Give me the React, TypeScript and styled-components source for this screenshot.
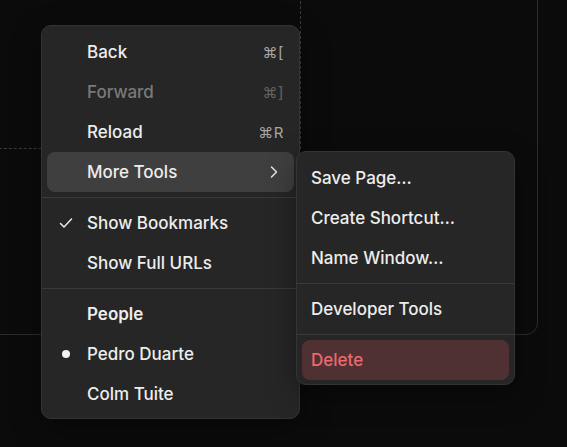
import React from "react";
import styled, { createGlobalStyle, css } from "styled-components";

const Global = createGlobalStyle`
  html, body { margin: 0; padding: 0; }
  body {
    background: #0b0b0b;
    width: 567px;
    height: 447px;
    overflow: hidden;
    font-family: Inter, "Noto Sans", sans-serif;
    -webkit-font-smoothing: antialiased;
  }
`;

const Stage = styled.div`
  position: relative;
  width: 567px;
  height: 447px;
  overflow: hidden;
`;

const Card = styled.div`
  box-sizing: border-box;
  width: 620px;
  height: 435px;
  margin-left: -82px;
  margin-top: -100px;
  border: 1px solid #2c2c2c;
  border-radius: 12px;
  display: flex;
  align-items: flex-start;
`;

const TriggerArea = styled.div`
  box-sizing: border-box;
  width: 382px;
  height: 248px;
  border-right: 1px dashed #3a3a3a;
  border-bottom: 1px dashed #3a3a3a;
`;

const Menu = styled.div`
  position: absolute;
  box-sizing: border-box;
  left: 41px;
  top: 25px;
  width: 259px;
  padding: 6px 5px 4px;
  background: #262626;
  border: 1px solid #343434;
  border-radius: 10px;
  display: flex;
  flex-direction: column;
  box-shadow: 0 10px 30px rgba(0, 0, 0, 0.35);
`;

const SubMenu = styled(Menu)`
  left: calc(100% + 2px);
  top: -1px;
  width: 219px;
`;

const Item = styled.div<{ $highlight?: boolean; $disabled?: boolean; $bold?: boolean; $danger?: boolean; $inset?: boolean }>`
  position: relative;
  box-sizing: border-box;
  height: 40px;
  display: flex;
  align-items: center;
  padding: 0 10px 0 ${(p) => (p.$inset ? "40px" : "9px")};
  border-radius: 8px;
  font-size: 17px;
  font-weight: ${(p) => (p.$bold ? 600 : 500)};
  color: #ededed;
  ${(p) => p.$highlight && css`background: #3f3f3f;`}
  ${(p) => p.$disabled && css`color: #7a7a7a;`}
  ${(p) => p.$danger && css`background: #4f3133; color: #ea6a70;`}
`;

const Label = styled.span`
  flex: 1;
  white-space: nowrap;
`;

const Shortcut = styled.span<{ $disabled?: boolean }>`
  font-size: 15px;
  font-weight: 400;
  color: ${(p) => (p.$disabled ? "#636363" : "#a6a6a6")};
  letter-spacing: 0.5px;
`;

const Indicator = styled.span`
  position: absolute;
  left: 10px;
  top: 0;
  bottom: 0;
  width: 18px;
  display: flex;
  align-items: center;
  justify-content: center;
`;

const Dot = styled.span`
  width: 8px;
  height: 8px;
  border-radius: 50%;
  background: #f2f2f2;
`;

const Separator = styled.div`
  height: 1px;
  margin: 5px -5px;
  background: #3a3a3a;
`;

const Check = () => (
  <svg width="18" height="18" viewBox="0 0 18 18" fill="none">
    <path d="M3.5 9.5 L7 13 L14.5 5" stroke="#eaeaea" strokeWidth="1.5" strokeLinecap="round" strokeLinejoin="round" />
  </svg>
);

const Chevron = () => (
  <svg width="20" height="20" viewBox="0 0 20 20" fill="none">
    <path d="M7.5 15 L12.5 10 L7.5 5" stroke="#e6e6e6" strokeWidth="1.5" strokeLinecap="round" strokeLinejoin="round" />
  </svg>
);

export default function App() {
  return (
    <>
      <Global />
      <Stage>
        <Card>
          <TriggerArea />
        </Card>
        <Menu>
          <Item $inset>
            <Label>Back</Label>
            <Shortcut>⌘[</Shortcut>
          </Item>
          <Item $inset $disabled>
            <Label>Forward</Label>
            <Shortcut $disabled>⌘]</Shortcut>
          </Item>
          <Item $inset>
            <Label>Reload</Label>
            <Shortcut>⌘R</Shortcut>
          </Item>
          <Item $inset $highlight>
            <Label>More Tools</Label>
            <Chevron />
            <SubMenu>
              <Item>Save Page…</Item>
              <Item>Create Shortcut…</Item>
              <Item>Name Window…</Item>
              <Separator />
              <Item>Developer Tools</Item>
              <Separator />
              <Item $danger>Delete</Item>
            </SubMenu>
          </Item>
          <Separator />
          <Item $inset>
            <Indicator>
              <Check />
            </Indicator>
            <Label>Show Bookmarks</Label>
          </Item>
          <Item $inset>
            <Label>Show Full URLs</Label>
          </Item>
          <Separator />
          <Item $inset $bold>
            <Label>People</Label>
          </Item>
          <Item $inset>
            <Indicator>
              <Dot />
            </Indicator>
            <Label>Pedro Duarte</Label>
          </Item>
          <Item $inset>
            <Label>Colm Tuite</Label>
          </Item>
        </Menu>
      </Stage>
    </>
  );
}
